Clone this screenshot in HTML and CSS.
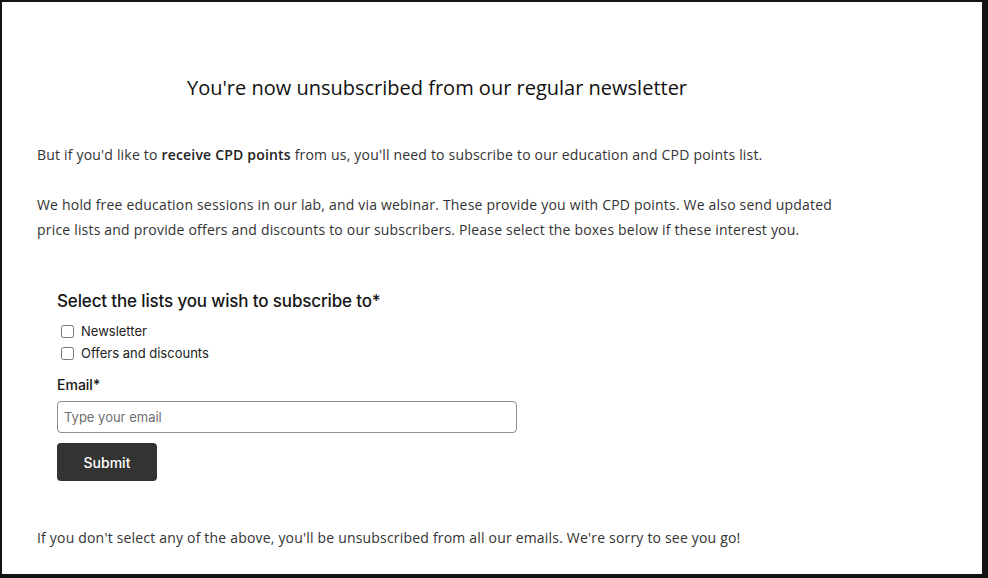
FILE: index.html
```html
<!DOCTYPE html>
<html lang="en">
<head>
<meta charset="utf-8">
<title>Unsubscribed</title>
<link rel="stylesheet" href="styles.css">
</head>
<body>
<div class="frame">
  <main class="content">
    <h1 class="title">You're now unsubscribed from our regular newsletter</h1>
    <p class="text">But if you'd like to <strong>receive CPD points</strong> from us, you'll need to subscribe to our education and CPD points list.</p>
    <p class="text text-wide">We hold free education sessions in our lab, and via webinar. These provide you with CPD points. We also send updated price lists and provide offers and discounts to our subscribers. Please select the boxes below if these interest you.</p>
    <form class="form">
      <h2 class="form-title">Select the lists you wish to subscribe to*</h2>
      <label class="check"><input type="checkbox" class="box"><span>Newsletter</span></label>
      <label class="check"><input type="checkbox" class="box"><span>Offers and discounts</span></label>
      <label class="field-label" for="email">Email*</label>
      <input id="email" class="input" type="email" placeholder="Type your email">
      <button type="button" class="submit">Submit</button>
    </form>
    <p class="text last">If you don't select any of the above, you'll be unsubscribed from all our emails. We're sorry to see you go!</p>
  </main>
</div>
</body>
</html>
```

FILE: styles.css
```css
html, body {
  margin: 0;
  padding: 0;
  height: 100%;
}
body {
  background: #121212;
  padding: 2px 6px 4px 2px;
  box-sizing: border-box;
}
.frame {
  background: #fff;
  height: 100%;
  overflow: hidden;
}
.content {
  width: 800px;
  padding-left: 35px;
  padding-top: 72px;
}
.title {
  margin: 0;
  font-family: "Open Sans", sans-serif;
  font-weight: 500;
  font-size: 20px;
  line-height: 28px;
  color: #111;
  text-align: center;
}
.text {
  font-family: "Open Sans", sans-serif;
  font-size: 14px;
  letter-spacing: 0.19px;
  line-height: 25px;
  color: #333;
  margin: 0;
}
.text strong {
  font-weight: 600;
  color: #222;
}
.title + .text {
  margin-top: 40px;
}
.text-wide {
  margin-top: 25px;
}
.form {
  display: flex;
  flex-direction: column;
  align-items: flex-start;
  padding-left: 20px;
  margin-top: 46px;
  font-family: Inter, "Noto Sans", sans-serif;
  color: #161616;
}
.form-title {
  margin: 0 0 6px;
  font-size: 17px;
  letter-spacing: -0.15px;
  font-weight: 500;
  line-height: 26px;
}
.check {
  display: flex;
  align-items: center;
  gap: 7px;
  font-size: 13px;
  line-height: 22px;
  color: #222;
}
.box {
  margin: 0 0 0 4px;
  width: 13px;
  height: 13px;
}
.field-label {
  margin-top: 11px;
  font-size: 14px;
  font-weight: 500;
  line-height: 20px;
}
.input {
  margin-top: 6px;
  box-sizing: border-box;
  width: 460px;
  height: 32px;
  border: 1px solid #8d8d8d;
  border-radius: 4px;
  padding: 0 6px;
  font-family: Inter, "Noto Sans", sans-serif;
  font-size: 13px;
  color: #222;
}
.input::placeholder {
  color: #6f6f6f;
}
.submit {
  margin-top: 10px;
  width: 100px;
  height: 38px;
  border: none;
  border-radius: 4px;
  background: #333;
  color: #fff;
  font-family: Inter, "Noto Sans", sans-serif;
  font-size: 14px;
  font-weight: 500;
}
.last {
  margin-top: 44px;
}
```
